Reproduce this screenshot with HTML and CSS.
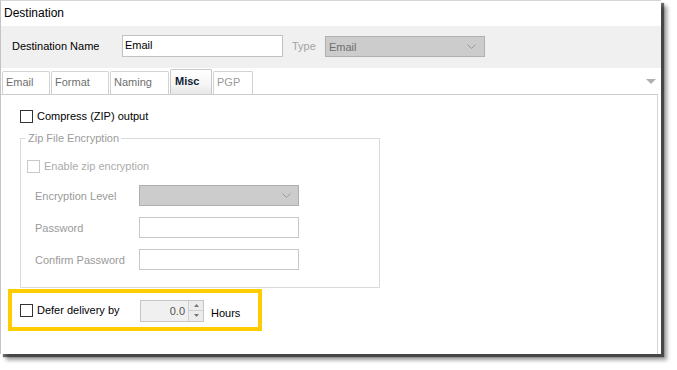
FILE: index.html
```html
<!DOCTYPE html>
<html lang="en">
<head>
    <meta charset="UTF-8">
    <title>Destination</title>
    <link rel="stylesheet" href="styles.css">
</head>
<body>
    <!-- destination dialog -->
    <div class="window">
        <div class="header">Destination</div>

        <!-- name / type row -->
        <div class="name-row">
            <span class="name-label">Destination Name</span>
            <div class="textbox name-box">Email</div>
            <span class="type-label">Type</span>
            <div class="select type-select">
                <span>Email</span>
                <svg class="chev" width="9" height="5" viewBox="0 0 9 5"><polyline points="0.5,0.5 4.5,4.5 8.5,0.5" fill="none" stroke="#9a9a9a" stroke-width="1"/></svg>
            </div>
        </div>

        <!-- tabs -->
        <div class="tab-row">
            <div class="tab">Email</div>
            <div class="tab w-format">Format</div>
            <div class="tab w-naming">Naming</div>
            <div class="tab active">Misc</div>
            <div class="tab w-pgp">PGP</div>
            <div class="tab-menu"></div>
        </div>

        <div class="panel">
            <div class="check-row compress">
                <span class="box"></span>
                <span>Compress (ZIP) output</span>
            </div>

            <fieldset class="group">
                <legend>Zip File Encryption</legend>
                <div class="check-row enable">
                    <span class="box disabled"></span>
                    <span>Enable zip encryption</span>
                </div>
                <div class="field-row">
                    <span class="field-label">Encryption Level</span>
                    <div class="select enc-select">
                        <svg class="chev" width="9" height="5" viewBox="0 0 9 5"><polyline points="0.5,0.5 4.5,4.5 8.5,0.5" fill="none" stroke="#9a9a9a" stroke-width="1"/></svg>
                    </div>
                </div>
                <div class="field-row">
                    <span class="field-label">Password</span>
                    <div class="textbox field-box"></div>
                </div>
                <div class="field-row">
                    <span class="field-label">Confirm Password</span>
                    <div class="textbox field-box"></div>
                </div>
            </fieldset>

            <!-- highlighted defer option -->
            <div class="highlight">
                <div class="defer-row">
                    <span class="box"></span>
                    <span class="defer-label">Defer delivery by</span>
                    <div class="spinner">
                        <span class="spin-value">0.0</span>
                        <div class="spin-btns">
                            <div class="spin-btn"><svg width="5" height="3" viewBox="0 0 5 3"><polygon points="0,3 2.5,0 5,3" fill="#777"/></svg></div>
                            <div class="spin-btn"><svg width="5" height="3" viewBox="0 0 5 3"><polygon points="0,0 2.5,3 5,0" fill="#777"/></svg></div>
                        </div>
                    </div>
                    <span class="hours">Hours</span>
                </div>
            </div>
        </div>
    </div>
</body>
</html>
```

FILE: styles.css
```css
/* destination dialog */
body {
    margin: 0;
    padding-bottom: 16px;
    background: #fff;
    font-family: "Liberation Sans", Arial, sans-serif;
    font-size: 11px;
    color: #000;
}

.window {
    box-sizing: border-box;
    width: 661px;
    height: 354px;
    background: #fff;
    border-left: 1px solid #c4c4c4;
    border-top: 1px solid #d6d6d6;
    /* drop shadow of the captured dialog */
    box-shadow: 3px 3px 1px rgba(0, 0, 0, 0.55), 6px 6px 4px rgba(0, 0, 0, 0.4);
    display: flex;
    flex-direction: column;
}

.header {
    height: 25px;
    line-height: 24px;
    padding-left: 3px;
    font-size: 12px;
    color: #000;
    flex-shrink: 0;
}

/* name row */
.name-row {
    height: 42px;
    flex-shrink: 0;
    background: #f0f0f0;
    display: flex;
    align-items: flex-start;
    padding-top: 9px;
    box-sizing: border-box;
}

.name-label {
    margin-left: 11px;
    width: 110px;
    line-height: 22px;
    color: #000;
}

.textbox {
    box-sizing: border-box;
    background: #fff;
    border: 1px solid #c2c2c2;
}

.name-box {
    width: 161px;
    height: 22px;
    padding: 3px 0 0 2px;
    color: #000;
}

.type-label {
    margin-left: 9px;
    width: 33px;
    line-height: 22px;
    color: #a3a3a3;
}

.select {
    box-sizing: border-box;
    background: #cccccc;
    border: 1px solid #b0b0b0;
    display: flex;
    align-items: center;
    justify-content: space-between;
    height: 21px;
}

.type-select {
    width: 160px;
    margin-top: 1px;
    padding: 0 8px 0 3px;
    color: #6e6e6e;
}

.chev {
    margin-left: auto;
}

/* tabs */
.tab-row {
    height: 26px;
    flex-shrink: 0;
    display: flex;
    align-items: flex-end;
    padding-left: 1px;
}

.tab {
    box-sizing: border-box;
    width: 48px;
    height: 23px;
    margin-right: 1px;
    padding: 4px 0 0 3px;
    border: 1px solid #d2d2d2;
    border-bottom: none;
    border-radius: 2px 2px 0 0;
    background: #fff;
    color: #707070;
}

.w-format { width: 58px; }
.w-naming { width: 59px; }
.w-pgp { width: 40px; color: #9a9a9a; }

.tab.active {
    width: 42px;
    height: 25px;
    padding: 5px 0 0 4px;
    font-weight: bold;
    color: #0f1d33;
    border-color: #c8c8c8;
    background: linear-gradient(#ffffff, #f6f6f6 60%, #e6e6e6);
}

.tab-menu {
    margin-left: auto;
    margin-right: 5px;
    align-self: center;
    width: 0;
    height: 0;
    border-left: 5px solid transparent;
    border-right: 5px solid transparent;
    border-top: 5px solid #b0b0b0;
}

/* panel */
.panel {
    flex: 1;
    margin-right: 3px;
    border-top: 1px solid #cdcdcd;
    border-right: 1px solid #d4d4d4;
}

.check-row {
    display: flex;
    align-items: center;
    height: 20px;
}

.box {
    box-sizing: border-box;
    width: 13px;
    height: 13px;
    border: 1px solid #333;
    background: #fff;
    margin-right: 4px;
    flex-shrink: 0;
}

.box.disabled {
    border-color: #c8c8c8;
}

.compress {
    margin: 11px 0 0 19px;
}

.group {
    box-sizing: border-box;
    width: 360px;
    margin: 4px 0 0 19px;
    padding: 0 0 17px 0;
    border: 1px solid #dadada;
    color: #a0a0a0;
}

.group legend {
    margin-left: 5px;
    padding: 0 2px;
    line-height: 16px;
    color: #9b9b9b;
}

.enable {
    margin: 10px 0 0 6px;
    color: #ababab;
}

.field-row {
    display: flex;
    align-items: center;
    height: 21px;
    margin-top: 11px;
    padding-left: 14px;
}

.enable + .field-row {
    margin-top: 9px;
}

.field-label {
    width: 104px;
    color: #9a9a9a;
}

.enc-select {
    width: 160px;
    padding-right: 7px;
}

.field-box {
    width: 160px;
    height: 21px;
    border-color: #c8c8c8;
}

/* highlighted defer row */
.highlight {
    box-sizing: border-box;
    width: 254px;
    height: 42px;
    margin: 1px 0 0 7px;
    border: 4px solid #ffcc00;
}

.defer-row {
    display: flex;
    align-items: center;
    height: 100%;
    padding-left: 8px;
}

.defer-label {
    width: 103px;
    color: #000;
}

.spinner {
    box-sizing: border-box;
    width: 64px;
    height: 22px;
    display: flex;
    background: #f0f0f0;
    border: 1px solid #c6c6c6;
    margin-top: 1px;
}

.spin-value {
    flex: 1;
    text-align: right;
    padding-right: 3px;
    line-height: 20px;
    color: #555;
}

.spin-btns {
    width: 14px;
    display: flex;
    flex-direction: column;
    border-left: 1px solid #d0d0d0;
}

.spin-btn {
    flex: 1;
    display: flex;
    align-items: center;
    justify-content: center;
    background: #ececec;
}

.spin-btn + .spin-btn {
    border-top: 1px solid #d0d0d0;
}

.hours {
    margin: 5px 0 0 7px;
    color: #000;
}
```
